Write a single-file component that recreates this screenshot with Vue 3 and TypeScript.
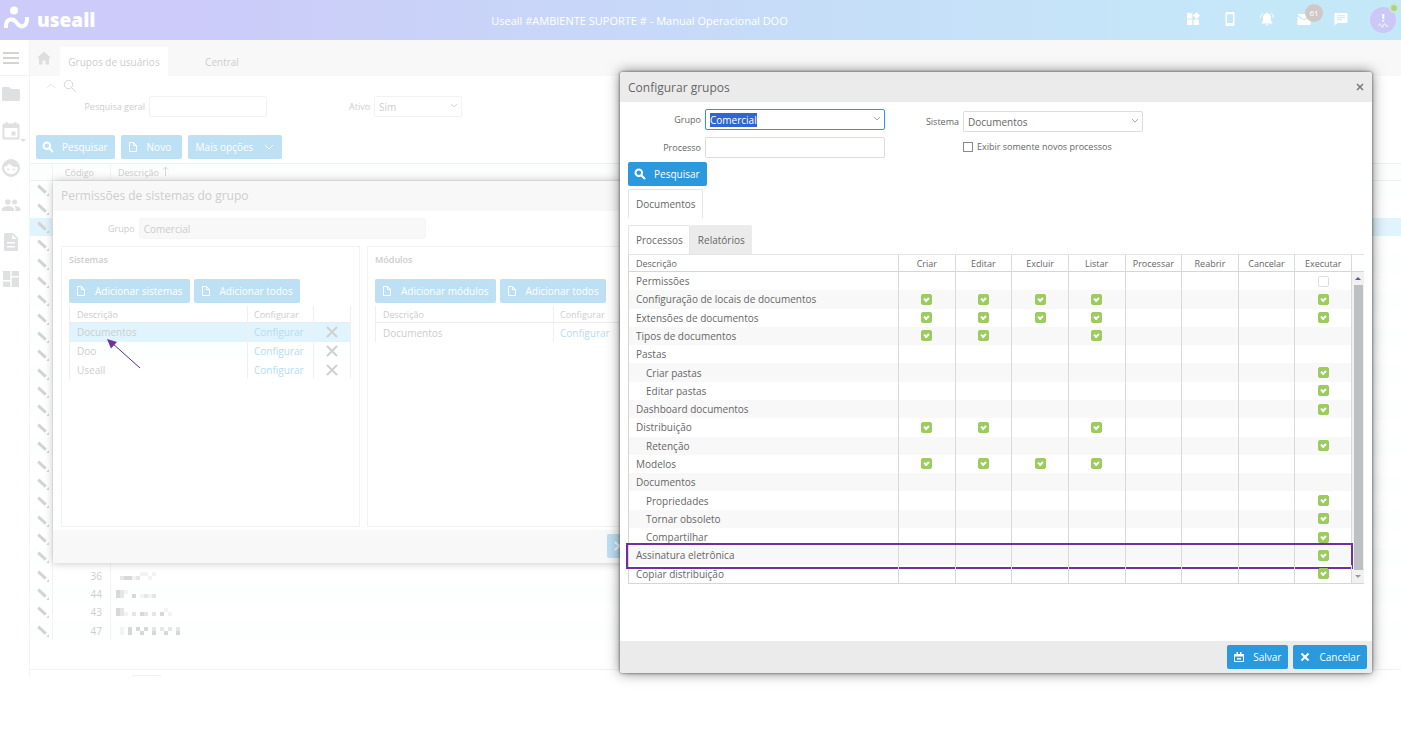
<script setup lang="ts">
import { onMounted, ref } from 'vue'

interface Permission {
  name: string
  level?: number
  marks: string
  marked?: boolean
}

const columns = ['Criar', 'Editar', 'Excluir', 'Listar', 'Processar', 'Reabrir', 'Cancelar', 'Executar']

// One character per column: x = ticked, o = empty box, . = not applicable
const permissions = ref<Permission[]>([
  { name: 'Permissões', marks: '.......o' },
  { name: 'Configuração de locais de documentos', marks: 'xxxx...x' },
  { name: 'Extensões de documentos', marks: 'xxxx...x' },
  { name: 'Tipos de documentos', marks: 'xx.x....' },
  { name: 'Pastas', marks: '........' },
  { name: 'Criar pastas', level: 1, marks: '.......x' },
  { name: 'Editar pastas', level: 1, marks: '.......x' },
  { name: 'Dashboard documentos', marks: '.......x' },
  { name: 'Distribuição', marks: 'xx.x....' },
  { name: 'Retenção', level: 1, marks: '.......x' },
  { name: 'Modelos', marks: 'xxxx....' },
  { name: 'Documentos', marks: '........' },
  { name: 'Propriedades', level: 1, marks: '.......x' },
  { name: 'Tornar obsoleto', level: 1, marks: '.......x' },
  { name: 'Compartilhar', level: 1, marks: '.......x' },
  { name: 'Assinatura eletrônica', marks: '.......x', marked: true },
  { name: 'Copiar distribuição', marks: '.......x' },
])

// Masked names: [x, y, shade] of 4px cells
type Cell = [number, number, string]
interface GroupRow {
  code: string
  mask: Cell[]
}
const d = '#d8d8d8'
const m = '#e6e6e6'
const l = '#f3f3f3'
const masks: GroupRow[] = [
  { code: '36', mask: [[4, 4, m], [8, 4, d], [12, 4, d], [16, 4, l], [20, 4, m], [24, 0, l], [28, 0, l], [32, 4, l], [36, 0, l]] },
  { code: '44', mask: [[0, 0, d], [0, 4, d], [4, 0, m], [4, 4, m], [8, 0, l], [16, 4, d], [24, 4, l], [28, 4, m], [32, 4, l], [36, 4, m]] },
  { code: '43', mask: [[0, 0, d], [0, 4, d], [4, 0, m], [4, 4, m], [8, 4, l], [16, 4, m], [24, 4, d], [28, 4, m], [36, 4, m], [44, 4, d], [48, 0, l], [52, 4, l]] },
  { code: '47', mask: [[4, 0, l], [4, 4, l], [12, 0, d], [12, 4, d], [20, 0, d], [24, 4, d], [28, 0, d], [36, 0, m], [36, 4, d], [44, 0, m], [48, 4, d], [52, 0, m], [60, 4, d], [60, 0, m]] },
]
const groups: GroupRow[] = [
  ...Array.from({ length: 21 }, () => ({ code: '', mask: [] as Cell[] })),
  ...masks,
]

const systems = ['Documentos', 'Doo', 'Useall']
const groupName = ref('Comercial')
const processName = ref('')
const onlyNew = ref(false)
const groupInput = ref<HTMLInputElement | null>(null)

onMounted(() => {
  groupInput.value?.focus()
  groupInput.value?.select()
})
</script>

<template>
  <div class="app">
    <header class="topbar">
      <div class="brand">
        <svg class="brand-mark" viewBox="0 0 26 24">
          <circle cx="11" cy="4.500" r="4" fill="#fff" />
          <path d="M3 22v-2C3 13 9 11.500 13 16l2 2.500C19 22.500 24 20 24 13v-2" fill="none" stroke="#fff" stroke-width="4" />
        </svg>
        <span class="brand-name">useall</span>
      </div>
      <h1 class="top-title">Useall #AMBIENTE SUPORTE # - Manual Operacional DOO</h1>
      <nav class="top-icons">
        <button type="button" aria-label="Aplicativos">
          <svg viewBox="0 0 16 16"><path d="M2 2h5.400v5.400H2zM2 8.600h5.400V14H2zM8.600 8.600H14V14H8.600zM11.500 1.200l3.500 3.500-3.500 3.500L8 4.700z" /></svg>
        </button>
        <button type="button" aria-label="Dispositivo">
          <svg viewBox="0 0 16 16"><path fill-rule="evenodd" d="M4.500 1h7a1 1 0 0 1 1 1v12a1 1 0 0 1-1 1h-7a1 1 0 0 1-1-1V2a1 1 0 0 1 1-1zM5 3.200v8.800h6V3.200z" /></svg>
        </button>
        <button type="button" aria-label="Notificações">
          <svg viewBox="0 0 16 16"><path d="M8 1.500a1 1 0 0 1 1 1c2 .5 3 2.200 3 4.300V10l1.300 1.600v.8H2.700v-.8L4 10V6.800c0-2.100 1-3.800 3-4.300a1 1 0 0 1 1-1zM6.600 13.200h2.800a1.400 1.400 0 0 1-2.800 0z" /><path d="M3.800 2.200Q1.800 3.800 1.700 6.500M12.200 2.200q2 1.600 2.100 4.300" fill="none" stroke="#fff" /></svg>
        </button>
        <button type="button" aria-label="Mensagens">
          <svg viewBox="0 0 16 16"><path d="M2.500 3h11a1 1 0 0 1 1 1L8 8.200 1.500 4a1 1 0 0 1 1-1zM1.500 5.400 8 9.500l6.500-4.100V13a1 1 0 0 1-1 1h-11a1 1 0 0 1-1-1z" /></svg>
          <span class="count">61</span>
        </button>
        <button type="button" aria-label="Conversas">
          <svg viewBox="0 0 16 16"><path fill-rule="evenodd" d="M2.500 2h11a1 1 0 0 1 1 1v8a1 1 0 0 1-1 1H4.500l-3 2.500V3a1 1 0 0 1 1-1zM4 4.300v1h8v-1zM4 6.300v1h8v-1zM4 8.300v1h5v-1z" /></svg>
        </button>
        <button type="button" class="avatar" aria-label="Perfil">
          <svg viewBox="0 0 26 26"><path d="M12.200 7h2v5h-2zM12.200 13h2v1.500h-2z" /><path d="M8.500 18.500c0-2 2.500-2 2.500 0s2.500 2 2.500 0 2.500-2 2.500 0 2 1 2 0" fill="none" stroke="#fff" /></svg>
          <span class="online"></span>
        </button>
      </nav>
    </header>

    <div class="workspace">
      <aside class="sidebar">
        <button type="button" class="menu" aria-label="Menu"><span></span><span></span><span></span></button>
        <button type="button" aria-label="Pastas"><svg viewBox="0 0 20 20"><path d="M3 3h5l2 2h7.500A1.500 1.500 0 0 1 19 6.500v9a1.500 1.500 0 0 1-1.500 1.500h-15A1.500 1.500 0 0 1 1 15.500v-11A1.500 1.500 0 0 1 3 3z" /></svg></button>
        <button type="button" aria-label="Calendário"><svg viewBox="0 0 20 20"><path fill-rule="evenodd" d="M4.500 1h2v1.500h7V1h2v1.500H17A1.500 1.500 0 0 1 18.500 4v13a1.500 1.500 0 0 1-1.500 1.500H3A1.500 1.500 0 0 1 1.500 17V4A1.500 1.500 0 0 1 3 2.500h1.500zM3.500 7v9.500h13V7zM10.500 10.500h4v4h-4z" /></svg><i class="caret"></i></button>
        <button type="button" aria-label="Atendimento"><svg viewBox="0 0 20 20"><path fill-rule="evenodd" d="M10 1a9 9 0 1 1 0 18 9 9 0 0 1 0-18zM3 9a7 7 0 1 0 14 .3C13 9.500 10 8 8.300 5.500 7.200 7.500 5.300 8.600 3 9z" /><circle cx="7.200" cy="11.500" r="1.100" /><circle cx="12.800" cy="11.500" r="1.100" /></svg></button>
        <button type="button" aria-label="Usuários"><svg viewBox="0 0 20 20"><circle cx="6.800" cy="7" r="2.800" /><circle cx="13.500" cy="7" r="2.500" /><path d="M1 16v-2c0-2 4-3 6-3s6 1 6 3v2zM14.500 16v-2c0-1.300-.5-2.200-1.500-2.900 2-.1 6.500.9 6.500 2.900v2z" /></svg></button>
        <button type="button" aria-label="Documentos"><svg viewBox="0 0 20 20"><path fill-rule="evenodd" d="M4.500 1H12l5 5v11.500a1.500 1.500 0 0 1-1.500 1.500h-11A1.500 1.500 0 0 1 3 17.500v-15A1.500 1.500 0 0 1 4.500 1zM11 2.500V7h4.500zM6 10v1.600h8V10zm0 4v1.600h8V14z" /></svg></button>
        <button type="button" aria-label="Painéis"><svg viewBox="0 0 20 20"><path d="M2 2h7.300v9H2zM10.700 2H18v5h-7.300zM2 12.500h7.300V18H2zM10.700 8.500H18V18h-7.300z" /></svg></button>
      </aside>

      <main class="content">
        <div class="tabs">
          <button type="button" class="home" aria-label="Início"><svg viewBox="0 0 16 16"><path d="M8 1.500 15 8h-2v6.500H9.500v-4h-3v4H3V8H1z" /></svg></button>
          <button type="button" class="tab active">Grupos de usuários</button>
          <button type="button" class="tab">Central</button>
        </div>

        <div class="filter-tools">
          <svg class="up" viewBox="0 0 10 6"><path d="M1 5l4-4 4 4" /></svg>
          <svg class="lens" viewBox="0 0 14 14"><circle cx="5.500" cy="5.500" r="4.200" /><path d="M8.700 8.700l4 4" /></svg>
        </div>
        <div class="filters">
          <label for="general">Pesquisa geral</label>
          <input id="general" class="pale-box general" type="text" />
          <label for="active" class="active-label">Ativo</label>
          <span class="pick">
            <select id="active" class="pale-box active-pick"><option>Sim</option></select>
            <svg viewBox="0 0 8 6"><path d="M1 1l3 3 3-3" /></svg>
          </span>
        </div>

        <div class="actions">
          <button type="button" class="btn pale"><svg viewBox="0 0 12 12"><circle cx="4.800" cy="4.800" r="3.300" /><path d="M7.300 7.300l3.700 3.700" /></svg>Pesquisar</button>
          <button type="button" class="btn pale"><svg class="page" viewBox="0 0 12 12"><path d="M2.500 1.500h4l3 3v6h-7zM6.500 1.500v3h3" /></svg>Novo</button>
          <button type="button" class="btn pale more">Mais opções<svg class="down" viewBox="0 0 10 6"><path d="M1 1l4 4 4-4" /></svg></button>
        </div>

        <table class="groups">
          <thead>
            <tr><th class="c-edit"></th><th class="c-code">Código</th><th>Descrição<svg class="sort" viewBox="0 0 7 10"><path d="M3.500 10V1M1 3.500 3.500 1 6 3.500" /></svg></th></tr>
          </thead>
          <tbody>
            <tr v-for="(g, i) in groups" :key="i" :class="{ chosen: i === 2 }">
              <td class="c-edit"><svg class="pencil" viewBox="0 0 12 12"><path d="M1.200 1.700 8.700 8.700" stroke="#d2d3d4" stroke-width="3" /><path d="M9.200 11.800 11.800 9.200 12 12z" fill="#d2d3d4" /></svg></td>
              <td class="c-code">{{ g.code }}</td>
              <td><svg v-if="g.mask.length" class="mask" viewBox="0 0 72 8"><rect v-for="(c, k) in g.mask" :key="k" :x="c[0]" :y="c[1]" width="4" height="4" :fill="c[2]" /></svg></td>
            </tr>
          </tbody>
        </table>
        <div class="grid-foot"><span></span></div>
      </main>
    </div>

    <section class="window back" aria-label="Permissões de sistemas do grupo">
      <h2 class="bar">Permissões de sistemas do grupo</h2>
      <div class="back-group">
        <label for="back-group">Grupo</label>
        <input id="back-group" type="text" value="Comercial" readonly />
      </div>
      <div class="panels">
        <section class="panel">
          <h3>Sistemas</h3>
          <div class="panel-actions">
            <button type="button" class="btn pale"><svg class="page" viewBox="0 0 12 12"><path d="M2.500 1.500h4l3 3v6h-7zM6.500 1.500v3h3" /></svg>Adicionar sistemas</button>
            <button type="button" class="btn pale"><svg class="page" viewBox="0 0 12 12"><path d="M2.500 1.500h4l3 3v6h-7zM6.500 1.500v3h3" /></svg>Adicionar todos</button>
          </div>
          <table class="list">
            <thead><tr><th>Descrição</th><th class="c-config">Configurar</th><th class="c-del"></th></tr></thead>
            <tbody>
              <tr v-for="(s, i) in systems" :key="s" :class="{ chosen: i === 0 }">
                <td>{{ s }}</td>
                <td class="c-config"><a href="#">Configurar</a></td>
                <td class="c-del"><button type="button" aria-label="Remover"><svg viewBox="0 0 12 12"><path d="M1 1l10 10M11 1 1 11" /></svg></button></td>
              </tr>
            </tbody>
          </table>
        </section>
        <section class="panel wide">
          <h3>Módulos</h3>
          <div class="panel-actions">
            <button type="button" class="btn pale"><svg class="page" viewBox="0 0 12 12"><path d="M2.500 1.500h4l3 3v6h-7zM6.500 1.500v3h3" /></svg>Adicionar módulos</button>
            <button type="button" class="btn pale"><svg class="page" viewBox="0 0 12 12"><path d="M2.500 1.500h4l3 3v6h-7zM6.500 1.500v3h3" /></svg>Adicionar todos</button>
          </div>
          <table class="list short">
            <thead><tr><th>Descrição</th><th class="c-config">Configurar</th><th class="c-del"></th></tr></thead>
            <tbody>
              <tr><td>Documentos</td><td class="c-config"><a href="#">Configurar</a></td><td class="c-del"></td></tr>
            </tbody>
          </table>
        </section>
      </div>
      <footer class="back-foot"><button type="button" class="btn pale" aria-label="Fechar"><svg viewBox="0 0 12 12"><path d="M2 2l8 8M10 2l-8 8" /></svg></button></footer>
      <svg class="arrow" viewBox="0 0 36 32"><path d="M34 30 6 5" stroke="#5b2d84" stroke-width="1" /><path d="M1 1l10 3-6 6.500z" fill="#7030a0" /></svg>
    </section>

    <section class="window front" role="dialog" aria-label="Configurar grupos">
      <h2 class="bar">Configurar grupos<button type="button" class="close" aria-label="Fechar"><svg viewBox="0 0 8 8"><path d="M1 1l6 6M7 1 1 7" /></svg></button></h2>
      <div class="front-body">
        <div class="form">
          <div class="form-col">
            <div class="field">
              <label for="group">Grupo</label>
              <span class="pick">
                <input id="group" ref="groupInput" v-model="groupName" class="box focus" type="text" role="combobox" />
                <svg viewBox="0 0 8 6"><path d="M1 1l3 3 3-3" /></svg>
              </span>
            </div>
            <div class="field">
              <label for="process">Processo</label>
              <input id="process" v-model="processName" class="box" type="text" />
            </div>
          </div>
          <div class="form-col second">
            <div class="field">
              <label for="system">Sistema</label>
              <span class="pick">
                <select id="system" class="box"><option>Documentos</option></select>
                <svg viewBox="0 0 8 6"><path d="M1 1l3 3 3-3" /></svg>
              </span>
            </div>
            <label class="only-new"><input v-model="onlyNew" type="checkbox" />Exibir somente novos processos</label>
          </div>
        </div>
        <button type="button" class="btn search"><svg viewBox="0 0 12 12"><circle cx="4.800" cy="4.800" r="3.300" /><path d="M7.300 7.300l3.700 3.700" /></svg>Pesquisar</button>
        <div class="subtabs first"><button type="button" class="subtab">Documentos</button></div>
        <div class="subtabs">
          <button type="button" class="subtab">Processos</button>
          <button type="button" class="subtab off">Relatórios</button>
        </div>
        <div class="sheet">
          <table class="perms">
            <thead>
              <tr><th class="c-name">Descrição</th><th v-for="c in columns" :key="c">{{ c }}</th></tr>
            </thead>
            <tbody>
              <tr v-for="p in permissions" :key="p.name" :class="{ marked: p.marked }">
                <td class="c-name" :class="{ child: p.level }">{{ p.name }}</td>
                <td v-for="(c, k) in columns" :key="c">
                  <input v-if="p.marks[k] !== '.'" type="checkbox" class="tick" :checked="p.marks[k] === 'x'" :aria-label="p.name + ': ' + c" />
                </td>
              </tr>
            </tbody>
          </table>
          <div class="scroll">
            <div class="scroll-head"></div>
            <i class="s-up"></i>
            <div class="thumb"></div>
            <i class="s-down"></i>
          </div>
        </div>
      </div>
      <footer class="front-foot">
        <button type="button" class="btn"><svg viewBox="0 0 12 12"><path d="M1.500 3.500h9v7h-9z" fill="none" /><path d="M1 3h10v2.500H1zM3.500 1h1.500v2H3.500zM7 1h1.500v2H7zM4 7h4v1.500H4z" class="solid" /></svg>Salvar</button>
        <button type="button" class="btn"><svg viewBox="0 0 12 12"><path d="M2.500 2.500l7 7M9.500 2.500l-7 7" /></svg>Cancelar</button>
      </footer>
    </section>
  </div>
</template>

<style>
body {
  margin: 0;
  background: #fff;
}
</style>

<style scoped>
.app {
  --small: 9px;
  --text: 10px;
  --title: 12px;
  --gray: #cdcdcd;
  position: relative;
  overflow: hidden;
  min-height: 100vh;
  font: var(--text) "Open Sans", "Noto Sans", sans-serif;
  color: var(--gray);
}
* { box-sizing: border-box; }
button, input, select { font: inherit; color: inherit; margin: 0; }
button { border: 0; padding: 0; background: none; }
label { font-size: var(--small); }
h1, h2, h3 { margin: 0; font-weight: 400; }
svg { display: block; flex: none; }

.topbar {
  display: flex;
  align-items: center;
  height: 40px;
  padding-right: 5px;
  background: linear-gradient(90deg, #cccbf9 0, #cccbf9 14%, #c6dcf8 55%, #c5e8f9 90%);
  color: #fff;
}
.brand { display: flex; align-items: center; gap: 8px; width: 94px; padding-left: 3px; }
.brand-mark { width: 26px; height: 24px; margin-bottom: 4px; }
.brand-name { font-size: 19px; font-weight: 800; line-height: 24px; }
.top-title { flex: 1; text-align: center; font-size: 11px; }
.top-icons { display: flex; align-items: center; gap: 21px; }
.top-icons button { position: relative; height: 16px; margin-bottom: 3px; }
.top-icons svg { width: 16px; height: 16px; fill: #fff; }
.count {
  position: absolute;
  left: 9px;
  top: -7px;
  width: 18px;
  height: 18px;
  border-radius: 50%;
  background: #d0c8c6;
  font-size: 8px;
  line-height: 18px;
  text-align: center;
}
.top-icons .avatar { width: 26px; height: 26px; margin: 0; border-radius: 50%; background: #cbc8f7; }
.top-icons .avatar svg { width: 26px; height: 26px; }
.online {
  position: absolute;
  right: -3px;
  top: -4px;
  width: 10px;
  height: 10px;
  border: 2px solid #cfe8c4;
  border-radius: 50%;
  background: #a8d48c;
}

.workspace { display: flex; }
.sidebar { display: flex; flex-direction: column; width: 30px; height: 637px; border-right: 1px solid #f3f3f3; }
.sidebar button { position: relative; height: 37px; padding: 0 0 2px 1px; flex: none; }
.sidebar svg { width: 20px; height: 20px; fill: #dfe0e1; }
.sidebar .menu {
  display: flex;
  flex-direction: column;
  justify-content: center;
  gap: 3px;
  height: 36px;
  padding: 0 0 0 3px;
  border-bottom: 1px solid #f3f3f3;
}
.menu span { width: 16px; height: 2px; background: #d4d3cf; }
.caret { position: absolute; left: 20px; bottom: 8px; border: 3px solid transparent; border-top-color: #dfe0e1; border-bottom: 0; }

.content { flex: 1; min-width: 0; }
.tabs { display: flex; align-items: flex-end; height: 36px; background: #f8f8f8; }
.home { width: 30px; height: 36px; padding-left: 6px; }
.home svg { width: 16px; height: 16px; fill: #dedede; }
.tab { height: 29px; width: 108px; }
.tab.active { background: #fff; }
.filter-tools { display: flex; align-items: center; gap: 7px; height: 20px; padding-left: 16px; fill: none; stroke: #d6d6d6; }
.up { width: 10px; height: 6px; stroke: #e6e6e6; }
.lens { width: 14px; height: 14px; }
.filters { display: flex; align-items: center; height: 21px; gap: 4px; }
.filters > label:first-child { width: 115px; text-align: right; }
.active-label { margin-left: 78px; }
.pale-box { height: 21px; border: 1px solid #f2f2f2; border-radius: 2px; background: #fff; padding: 0 4px; outline: 0; appearance: none; }
.general { width: 118px; }
.active-pick { width: 88px; }
.pick { position: relative; display: flex; }
.pick svg { position: absolute; right: 4px; top: 7px; width: 8px; height: 6px; fill: none; stroke: #a9a9a9; pointer-events: none; }
.filters .pick svg { stroke: #d6d6d6; }

.btn {
  display: flex;
  align-items: center;
  gap: 8px;
  min-width: 61px;
  height: 24px;
  padding: 0 7px 0 6px;
  border-radius: 2px;
  background: #2b99de;
  color: #fff;
  white-space: nowrap;
}
.btn svg { width: 12px; height: 12px; fill: none; stroke: #fff; stroke-width: 2; }
.btn svg.page { stroke-width: 1; }
.btn .down { width: 10px; height: 6px; stroke-width: 1; }
.btn.pale { background: #bde0f5; }
.btn.more { gap: 11px; padding: 0 8px; }
.actions { display: flex; gap: 6px; padding: 18px 6px 4px; }

table { border-collapse: separate; border-spacing: 0; }
th { font-weight: 400; font-size: var(--small); text-align: left; padding: 0; }
td { height: 18px; padding: 0; line-height: 14px; }
.groups { width: 100%; height: 477px; table-layout: fixed; }
.groups th { height: 18px; border-top: 1px solid #f0f0f0; border-bottom: 1px solid #f0f0f0; background: #fcfdfd; }
.groups .c-edit { width: 22px; }
.groups .c-code { width: 59px; text-align: right; padding-right: 8px; border-left: 1px solid #f2f2f2; border-right: 1px solid #f2f2f2; }
.groups th.c-code { padding-right: 16px; }
.groups th:last-child { padding-left: 7px; }
.groups td:last-child { padding-left: 5px; }
.groups tbody tr:nth-child(odd) { background: #fdfefe; }
.groups tbody tr.chosen { background: #e0f4fd; }
.sort { display: inline-block; width: 7px; height: 10px; margin-left: 3px; fill: none; stroke: #d6d6d6; }
.pencil { width: 12px; height: 12px; margin-left: 7px; }
.mask { width: 72px; height: 8px; }
.grid-foot { height: 37px; padding: 29px 0 0 102px; overflow: hidden; background: linear-gradient(#f2f2f2, #f2f2f2) 0 29px / 100% 1px no-repeat; }
.grid-foot span { display: block; width: 29px; height: 12px; margin-top: 6px; border: 1px solid #efefef; border-radius: 2px; }

.window { position: absolute; display: flex; flex-direction: column; border-radius: 3px; background: #fff; }
.bar { font-size: var(--title); line-height: 29px; padding: 0 8px; }
.back { left: 53px; top: 181px; width: 700px; box-shadow: 0 0 8px rgba(0, 0, 0, 0.24); }
.back .bar { background: #f8f8f8; height: 30px; }
.back-group { display: flex; align-items: center; gap: 4px; padding: 7px 8px 7px 55px; }
.back-group input { width: 287px; height: 21px; border: 1px solid #f5f5f5; border-radius: 3px; background: #f8f8f8; padding: 0 4px; outline: 0; }
.panels { display: flex; gap: 7px; padding: 0 8px 3px; }
.panel { width: 299px; height: 281px; border: 1px solid #f2f2f2; padding: 0 7px; }
.panel.wide { flex: 1; }
.panel h3 { height: 32px; font-size: var(--small); line-height: 26px; font-weight: 600; }
.panel-actions { display: flex; gap: 4px; margin-bottom: 3px; }
.list { width: 282px; height: 73px; table-layout: fixed; border-left: 1px solid #efefef; }
.list.short { height: 36px; }
.list th { height: 17px; border-bottom: 1px solid #ececec; padding-left: 7px; }
.list td { padding-left: 7px; }
.list .c-config { width: 67px; padding-left: 6px; border-left: 1px solid #f0f0f0; border-right: 1px solid #f0f0f0; }
.list .c-del { width: 37px; padding: 0; border-right: 1px solid #f0f0f0; }
.list tbody tr:nth-child(2) { background: #fdfefe; }
.list tbody tr.chosen { background: #e0f4fd; }
.list a { color: #b5dcf5; text-decoration: none; }
.c-del button { display: block; margin: 0 auto; }
.c-del svg { width: 12px; height: 12px; stroke: #d0d0d0; stroke-width: 2; }
.back-foot { height: 33px; padding: 4px 0 0 554px; background: #f8f8f8; border-radius: 0 0 3px 3px; }
.arrow { position: absolute; left: 53px; top: 157px; width: 36px; height: 32px; fill: none; }

.front {
  right: 29px;
  top: 72px;
  width: 752px;
  color: #666;
  box-shadow: 0 0 3px rgba(0, 0, 0, 0.6), 0 0 13px rgba(0, 0, 0, 0.5);
}
.front .bar { display: flex; justify-content: space-between; align-items: center; height: 30px; background: #ebebeb; border-radius: 3px 3px 0 0; }
.close svg { width: 8px; height: 8px; stroke: #777; stroke-width: 1.500; }
.front-body { padding: 0 8px; height: 539px; }
.form { display: flex; gap: 40px; height: 60px; }
.form-col { display: flex; flex-direction: column; gap: 7px; padding-top: 7px; }
.form-col.second { padding-top: 9px; gap: 8px; }
.field { display: flex; align-items: center; gap: 4px; }
.field > label { width: 73px; text-align: right; }
.second .field > label { width: 34px; white-space: nowrap; }
.box { width: 180px; height: 21px; border: 1px solid #dcdcdc; border-radius: 2px; background: #fff; padding: 0 4px; outline: 0; appearance: none; }
.box.focus { border-color: #2b99de; }
.box::selection { background: #2f66d3; color: #fff; }
.only-new { display: flex; align-items: center; gap: 4px; padding-left: 38px; white-space: nowrap; }
.only-new input { width: 10px; height: 10px; border: 1px solid #888; appearance: none; }
.search { width: fit-content; }
.subtabs { display: flex; height: 29px; }
.subtabs.first { margin: 3px 0 7px; }
.subtab { padding: 0 6px 0 7px; border: 1px solid #e4e4e4; border-bottom: 0; border-radius: 2px 2px 0 0; }
.subtab.off { background: #ebebeb; border-color: #ebebeb; }
.sheet { display: flex; height: 330px; }
.perms { flex: 1; width: 100%; table-layout: fixed; height: 330px; border: 1px solid #d6d6d6; border-top-color: #e4e4e4; border-right: 0; }
.perms th { height: 17px; border-bottom: 1px solid #d6d6d6; text-align: center; }
.perms th, .perms td { border-right: 1px solid #d9d9d9; }
.perms .c-name { width: 270px; padding-left: 7px; text-align: left; }
.perms td.child { padding-left: 17px; }
.perms tbody tr { position: relative; }
.perms tbody tr:nth-child(even) { background: #f8f8f8; }
.marked .c-name::after { content: ""; position: absolute; inset: -3px -1px -4px -3px; border: 2px solid #7030a0; pointer-events: none; }
.tick { position: relative; display: block; width: 11px; height: 11px; margin: 0 auto; border: 1px solid #dedede; border-radius: 2px; appearance: none; background: #fff; }
.tick:checked { border-color: #9ccc5f; background: #9ccc5f; }
.tick:checked::after { content: ""; position: absolute; left: 2px; top: 2px; width: 5px; height: 4px; border: solid #fff; border-width: 0 0 2px 2px; box-sizing: border-box; transform: rotate(-45deg); }
.scroll { display: flex; flex-direction: column; align-items: center; flex: none; width: 12px; background: #f1f1f1; border-bottom: 1px solid #d6d6d6; }
.scroll-head { align-self: stretch; height: 18px; background: #fff; border: solid #d6d6d6; border-width: 1px 0; border-top-color: #e4e4e4; }
.s-up, .s-down { margin: 5px 0; border: 3px solid transparent; }
.s-up { border-bottom-color: #6b4a9a; border-top: 0; }
.s-down { border-top-color: #999; border-bottom: 0; }
.thumb { flex: 1; width: 9px; background: #bcc0c3; }
.front-foot { display: flex; justify-content: flex-end; gap: 5px; height: 32px; padding: 4px 5px 0; background: #ebebeb; border-radius: 0 0 3px 3px; }
.front-foot .btn:first-child svg { stroke-width: 1; }
.front-foot .solid { fill: #fff; stroke: none; }
</style>
